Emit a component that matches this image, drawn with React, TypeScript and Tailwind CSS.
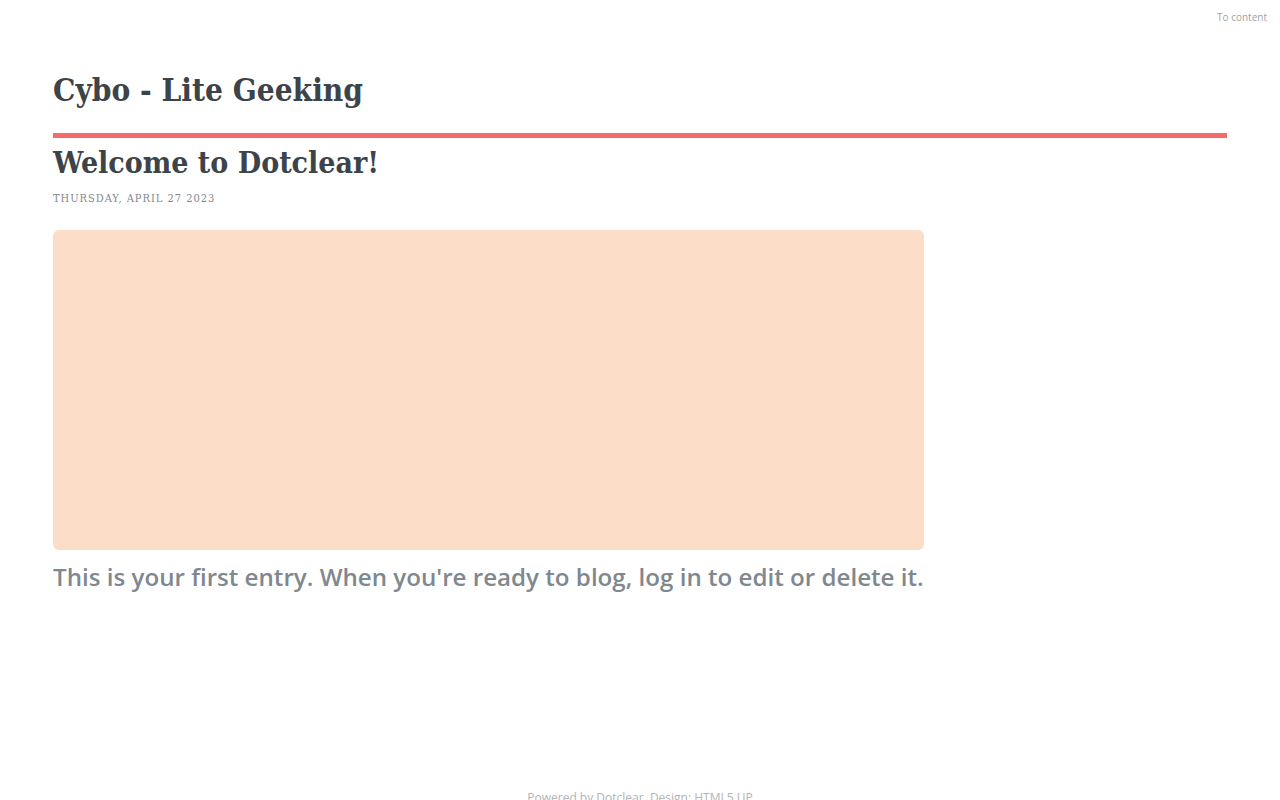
export default function App() {
  const slab = { fontFamily: '"DejaVu Serif Condensed", "DejaVu Serif", serif' };
  return (
    <div className="min-h-[800px] bg-white relative overflow-hidden" style={{ fontFamily: '"Open Sans", sans-serif' }}>
      <div className="flex justify-end pr-[13px] pt-[10px] h-[14px]">
        <span className="text-[10px] leading-[14px] text-[#9fa3a6]">To content</span>
      </div>
      <div className="px-[53px]">
        <header className="pt-[54px] pb-[21px] border-b-[5px] border-[#f56a6a]">
          <h1 className="text-[31.3px] leading-[44px] font-bold text-[#3d4449]" style={slab}>
            Cybo - Lite Geeking
          </h1>
        </header>
        <main className="w-[871px]">
          <h2 className="mt-[5px] text-[30px] leading-[40px] font-bold text-[#3d4449]" style={slab}>
            Welcome to Dotclear!
          </h2>
          <p className="mt-[9px] text-[11px] leading-[14px] tracking-[0.09em] uppercase text-[#7f888f]" style={slab}>
            Thursday, April 27 2023
          </p>
          <div className="mt-[24px] h-[320px] rounded-[6px] bg-[#fcddc7]" />
          <p className="mt-[9px] text-[24.15px] leading-[36px] font-semibold whitespace-nowrap text-[#7f888f]">
            This is your first entry. When you're ready to blog, log in to edit or delete it.
          </p>
        </main>
      </div>
      <footer className="absolute left-0 right-0 top-[789px] text-center text-[12px] leading-[18px] text-[#b0b3b5]">
        Powered by Dotclear. Design: HTML5 UP
      </footer>
    </div>
  );
}
